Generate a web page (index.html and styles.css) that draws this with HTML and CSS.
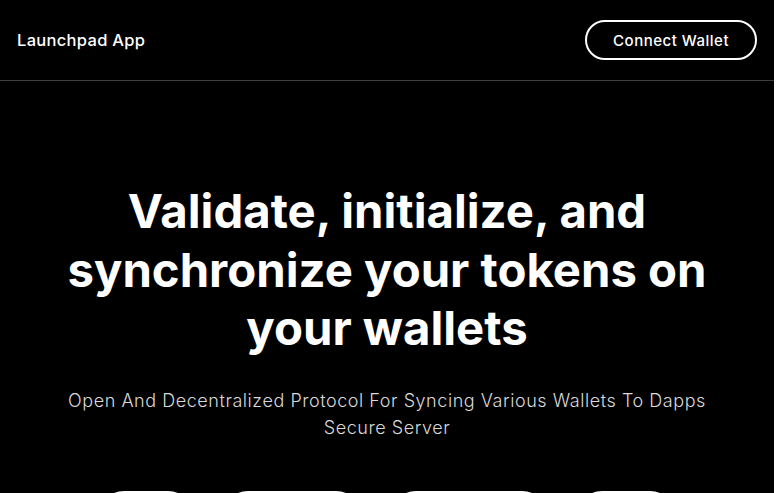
FILE: index.html
```html
<!DOCTYPE html>
<html lang="en">
<head>
    <meta charset="UTF-8">
    <meta name="viewport" content="width=device-width, initial-scale=1.0">
    <title>Launchpad App</title>
    <link rel="stylesheet" href="styles.css">
</head>
<body>

<header class="topbar">
    <div class="brand">Launchpad App</div>
    <button class="connect">Connect Wallet</button>
</header>

<section class="hero">
    <h1>Validate, initialize, and synchronize your tokens on your wallets</h1>
    <p class="lead">Open And Decentralized Protocol For Syncing Various Wallets To Dapps Secure Server</p>

    <div class="actions">
        <a class="pill pill-a" href="#">Migrate</a>
        <a class="pill pill-b" href="#">Claim Tokens</a>
        <a class="pill pill-c" href="#">Rectification</a>
        <a class="pill pill-d" href="#">Validate</a>
    </div>
</section>

</body>
</html>
```

FILE: styles.css
```css
html {
    background-color: #fff;
}
body {
    font-family: Inter, "Open Sans", sans-serif;
    background-color: #000;
    color: #fff;
    margin: 0 6px 0 0;
    padding: 0;
}
.topbar {
    height: 80px;
    display: flex;
    align-items: center;
    justify-content: space-between;
    padding: 0 17px;
    border-bottom: 1px solid #3f3f3f;
}
.brand {
    font-size: 16.5px;
    font-weight: 500;
    letter-spacing: 0.3px;
}
.connect {
    height: 40px;
    padding: 0 26px;
    background: transparent;
    color: #fff;
    border: 2px solid #fff;
    border-radius: 20px;
    font-family: inherit;
    font-size: 15px;
    font-weight: 500;
    letter-spacing: 0.5px;
    cursor: pointer;
}
.hero {
    text-align: center;
    padding: 101px 50px 80px;
}
h1 {
    font-size: 47.3px;
    line-height: 58.5px;
    font-weight: 700;
    margin: 0 auto;
    max-width: 660px;
}
.lead {
    font-size: 18px;
    line-height: 27px;
    font-weight: 300;
    letter-spacing: 0.55px;
    color: #d9d9d9;
    margin: 29px auto 0;
    max-width: 670px;
}
.actions {
    display: flex;
    justify-content: center;
    gap: 28px;
    margin-top: 50px;
}
.pill {
    display: inline-block;
    padding: 14px 0;
    border: 2px solid #fff;
    border-radius: 26px;
    color: #fff;
    text-decoration: none;
    font-size: 16px;
}
.pill-a { width: 92px; }
.pill-b { width: 136px; }
.pill-c { width: 154px; }
.pill-d { width: 96px; }
```
